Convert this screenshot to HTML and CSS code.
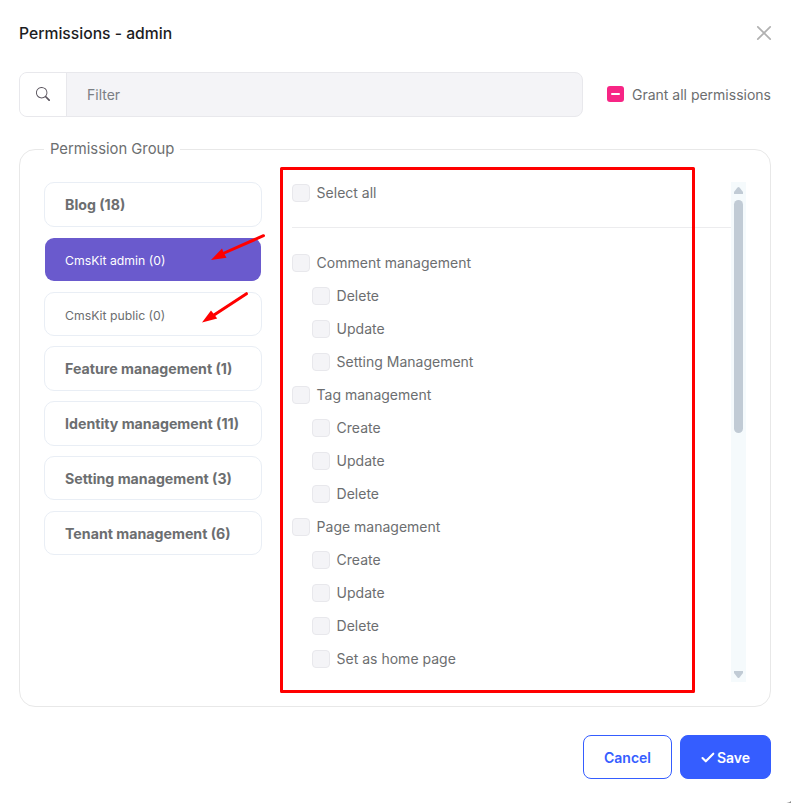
FILE: index.html
```html
<!DOCTYPE html>
<html lang="en">
<head>
<meta charset="utf-8">
<title>Permissions - admin</title>
<link rel="stylesheet" href="styles.css">
</head>
<body>
<div class="modal">
  <header class="modal-header">
    <h5 class="title">Permissions - admin</h5>
    <svg class="close" viewBox="0 0 16 16" width="16" height="16"><path d="M1.8 1.8l12.4 12.4M14.2 1.8L1.8 14.2" fill="none" stroke="#b1b1b1" stroke-width="1.7" stroke-linecap="round"/></svg>
  </header>
  <div class="toolbar">
    <div class="search">
      <span class="search-icon"><svg viewBox="0 0 16 16" width="14" height="14"><path fill="#5c5660" d="M11.742 10.344a6.5 6.5 0 1 0-1.397 1.398h-.001c.03.04.062.078.098.115l3.85 3.85a1 1 0 0 0 1.415-1.414l-3.85-3.85a1.007 1.007 0 0 0-.115-.1zM12 6.5a5.5 5.5 0 1 1-11 0 5.5 5.5 0 0 1 11 0z"/></svg></span>
      <span class="search-input">Filter</span>
    </div>
    <div class="grant"><span class="mixed"></span><span>Grant all permissions</span></div>
  </div>
  <section class="group">
    <div class="legend">Permission Group</div>
    <nav class="tabs">
      <div class="tab"><span>Blog (18)</span></div>
      <div class="tab empty active"><span>CmsKit admin (0)</span></div>
      <div class="tab empty"><span>CmsKit public (0)</span></div>
      <div class="tab"><span>Feature management (1)</span></div>
      <div class="tab"><span>Identity management (11)</span></div>
      <div class="tab"><span>Setting management (3)</span></div>
      <div class="tab"><span>Tenant management (6)</span></div>
    </nav>
    <div class="list">
      <div class="row"><i class="box"></i><span>Select all</span></div>
      <div class="divider"></div>
      <div class="row"><i class="box"></i><span>Comment management</span></div>
      <div class="row child"><i class="box"></i><span>Delete</span></div>
      <div class="row child"><i class="box"></i><span>Update</span></div>
      <div class="row child"><i class="box"></i><span>Setting Management</span></div>
      <div class="row"><i class="box"></i><span>Tag management</span></div>
      <div class="row child"><i class="box"></i><span>Create</span></div>
      <div class="row child"><i class="box"></i><span>Update</span></div>
      <div class="row child"><i class="box"></i><span>Delete</span></div>
      <div class="row"><i class="box"></i><span>Page management</span></div>
      <div class="row child"><i class="box"></i><span>Create</span></div>
      <div class="row child"><i class="box"></i><span>Update</span></div>
      <div class="row child"><i class="box"></i><span>Delete</span></div>
      <div class="row child"><i class="box"></i><span>Set as home page</span></div>
    </div>
    <div class="scrollbar">
      <svg viewBox="0 0 9 7" width="9" height="7"><path fill="#c1cbd5" d="M3.5.6Q4.5-.5 5.5.6L9 5v2H0V5z"/></svg>
      <div class="thumb"></div>
      <svg class="down" viewBox="0 0 9 7" width="9" height="7"><path fill="#c1cbd5" d="M0 0h9v2L5.5 6.4Q4.5 7.5 3.5 6.4L0 2z"/></svg>
    </div>
  </section>
  <footer class="footer">
    <button class="btn cancel"><span>Cancel</span></button>
    <button class="btn save"><svg viewBox="0 0 14 11" width="14" height="11"><path d="M1.5 6l3.3 3.3L12.3 1.7" fill="none" stroke="#fff" stroke-width="2.1" stroke-linecap="round" stroke-linejoin="round"/></svg><span>Save</span></button>
  </footer>
  <svg class="notes" viewBox="0 0 791 803" width="791" height="803">
    <rect x="281.5" y="168.5" width="412" height="523" fill="none" stroke="#f00" stroke-width="3" stroke-linejoin="round"/>
    <g stroke="#f00" stroke-width="3" stroke-linecap="round" fill="#f00">
      <path d="M263.500 235.700L223 253.500"/><path stroke="none" d="M211 260l11-11.500 1.700 4.200 2.800 5z"/>
      <path d="M246.500 293.700L214 315"/><path stroke="none" d="M202 322.500l9-12 3 3.700 3.200 4.300z"/>
    </g>
    <path d="M791 801V803H786.500Q790 802.500 791 801z" fill="#8a8a8a"/>
  </svg>
</div>
</body>
</html>
```
FILE: styles.css
```css
* { box-sizing: border-box; }
body {
  margin: 0;
  background: #fff;
  color: #6c6e70;
  font: 400 14px/22px Inter, "Liberation Sans", sans-serif;
}
.modal { position: relative; width: 791px; height: 803px; padding: 22px 20px 0 19px; overflow: hidden; }
.modal-header { display: flex; justify-content: space-between; align-items: center; height: 22px; }
.title { margin: 0; font-size: 15.7px; line-height: 21px; font-weight: 500; color: #1c1d1f; }
.close { margin-right: -1px; }
.toolbar { display: flex; justify-content: space-between; margin-top: 28px; height: 45px; }
.search { display: flex; width: 564px; border: 1px solid #e8e8ec; border-radius: 8px; background: #f4f4f7; overflow: hidden; }
.search-icon { display: flex; align-items: center; justify-content: center; width: 47px; padding-bottom: 1px; background: #fff; border-right: 1px solid #e8e8ec; }
.search-input { padding: 11px 20px; color: #7b7f84; }
.grant { display: flex; align-items: center; gap: 7.5px; }
.mixed { display: flex; align-items: center; justify-content: center; width: 17px; height: 16px; margin-bottom: 1px; border-radius: 3px; background: #f72585; }
.mixed::before { content: ""; width: 9px; height: 2px; border-radius: 1px; background: #fff; }
.group { position: relative; display: flex; margin-top: 32px; height: 558px; padding: 32px 24px 0; border: 1px solid #e8e8e8; border-radius: 16px; }
.legend { position: absolute; top: -12px; left: 24px; padding: 0 6px; background: #fff; font-size: 14.8px; }
.tabs { display: flex; flex-direction: column; gap: 10.1px; width: 218px; padding-top: .4px; }
.tab { display: flex; align-items: center; height: 44.6px; padding: 1.400px 0 0 20px; border: 1px solid #e9eef5; border-radius: 10px; font-size: 14.2px; font-weight: 700; }
.tab.empty { padding-top: 3px; font-size: 12.25px; font-weight: 400; }
.tab.active { background: #6a5acd; background-clip: padding-box; border-color: transparent; color: #fff; }
.list { width: 439px; margin-left: 30px; }
.row { display: flex; align-items: center; gap: 6.6px; height: 22px; margin-bottom: 11px; }
.row.child { margin-left: 20px; }
.box { width: 18px; height: 18px; border: 1px solid #e8e8ec; border-radius: 4px; background: #f4f4f7; }
.divider { height: 1px; margin: 23px 0 24px; background: #ececee; }
.scrollbar { display: flex; flex-direction: column; align-items: center; width: 15px; height: 500px; padding: 5px 0 4px; background: #f5fafc; }
.thumb { width: 9px; height: 233px; margin-top: 6px; border-radius: 5px; background: #c1cbd5; }
.down { margin-top: auto; }
.footer { display: flex; justify-content: flex-end; gap: 8px; margin-top: 28px; }
.btn { display: flex; align-items: center; justify-content: center; height: 44px; padding: 0; border: 1px solid #355dff; border-radius: 8px; font: 600 14px/22px Inter, "Liberation Sans", sans-serif; }
.btn span { padding-top: 2px; }
.cancel { width: 89px; background: #fff; color: #355dff; }
.save { width: 91px; gap: 2px; background: #355dff; color: #fff; }
.notes { position: absolute; top: 0; left: 0; pointer-events: none; }
```
